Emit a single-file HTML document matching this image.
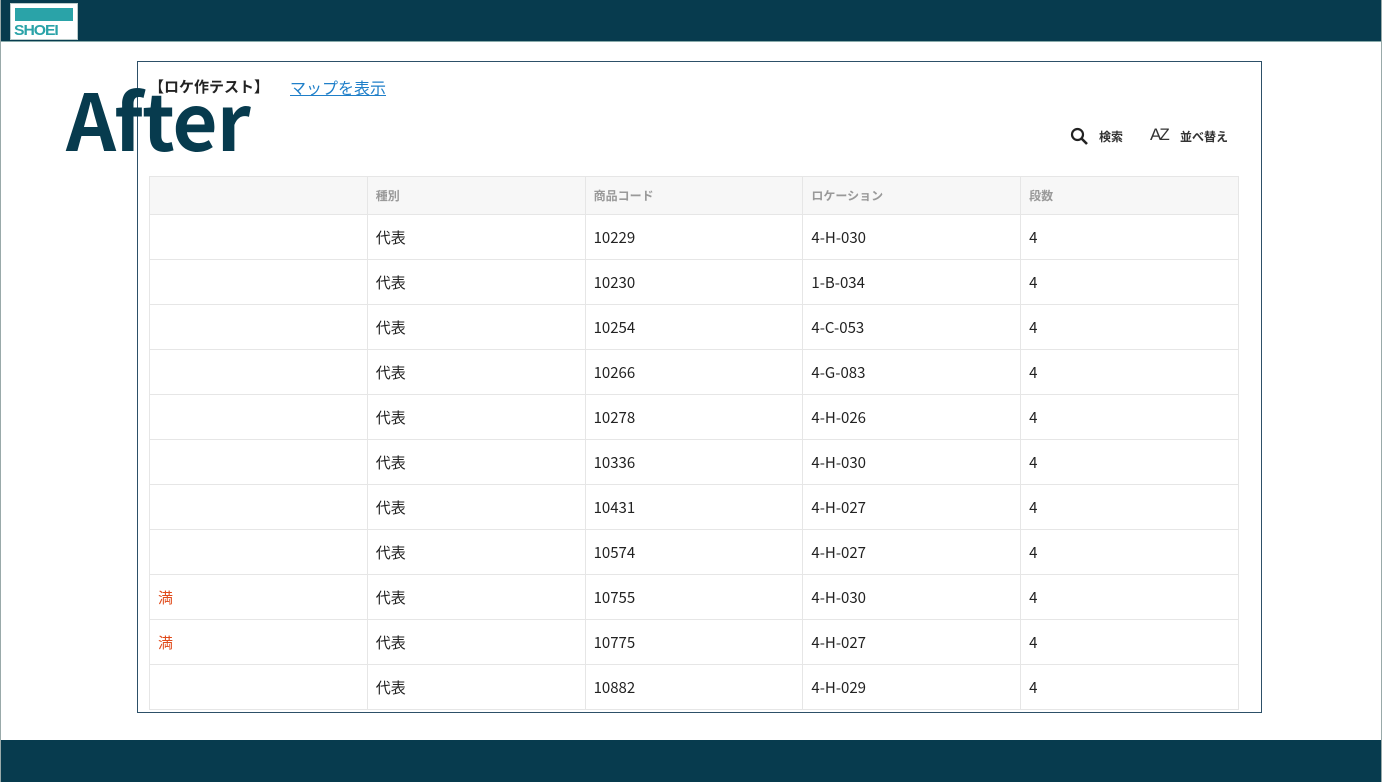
<!DOCTYPE html>
<html><head><meta charset="utf-8"><style>
*{margin:0;padding:0;box-sizing:border-box}
body{width:1382px;height:782px;background:#fff;position:relative;overflow:hidden;font-family:"Noto Sans CJK JP",sans-serif}
.edge{position:absolute;top:0;width:1px;height:782px;background:#9aa}
.top{position:absolute;left:0;top:0;width:1382px;height:42px;background:#073b4e;border-bottom:1px solid #8aa}
.bot{position:absolute;left:0;top:740px;width:1382px;height:42px;background:#073b4e}
.logo{position:absolute;left:10px;top:3px;width:68px;height:37px;background:#fff;border:1px solid #bcc}
.logo .bar{position:absolute;left:4px;top:4px;width:58px;height:13px;background:#2aa3a8}
.logo .t{position:absolute;left:3px;top:18px;font:900 15px "Liberation Sans",sans-serif;color:#2aa3a8;letter-spacing:-1px;transform:scaleX(1.05);transform-origin:left}
.panel{position:absolute;left:137px;top:61px;width:1125px;height:652px;border:1px solid #2d5068;background:#fff}
.after{position:absolute;left:66px;top:72px;font:bold 78px "Noto Sans CJK JP",sans-serif;color:#073b4e;line-height:1.2;letter-spacing:-1px}
.title{position:absolute;left:149px;top:76px;font-size:15px;font-weight:bold;color:#222}
.link{position:absolute;left:290px;top:75px;font-size:16px;color:#1f7fc9;text-decoration:underline}
.tools{position:absolute;top:128px;font-size:12px;font-weight:bold;color:#333}
table{position:absolute;left:149px;top:176px;border-collapse:collapse;width:1090px}
td,th{border:1px solid #e6e6e6;width:218px;text-align:left;padding-left:8px;font-size:15px;color:#222;font-weight:normal}
th{height:38px;background:#f7f7f7;font-size:12px;color:#999;font-weight:bold}
td{height:45px}
.r{color:#e04a1a}
</style></head><body>
<div class="top"><div class="logo"><div class="bar"></div><div class="t">SHOEI</div></div></div>
<div class="panel"></div>
<div class="title">【ロケ作テスト】</div>
<div class="link">マップを表示</div>
<svg style="position:absolute;left:1070px;top:127px" width="20" height="20" viewBox="0 0 20 20"><circle cx="7.5" cy="7.5" r="5.5" fill="none" stroke="#222" stroke-width="2.2"/><path d="M11.5 11.5L17 17" stroke="#222" stroke-width="2.6"/></svg>
<div class="tools" style="left:1099px">検索</div>
<div class="tools" style="left:1150px;font-size:17px;top:125px;font-weight:normal;font-family:'Liberation Sans',sans-serif">A<span style="position:relative;left:-2px">Z</span></div>
<div class="tools" style="left:1180px">並べ替え</div>
<table>
<tr><th></th><th>種別</th><th>商品コード</th><th>ロケーション</th><th>段数</th></tr>
<tr><td></td><td>代表</td><td>10229</td><td>4-H-030</td><td>4</td></tr>
<tr><td></td><td>代表</td><td>10230</td><td>1-B-034</td><td>4</td></tr>
<tr><td></td><td>代表</td><td>10254</td><td>4-C-053</td><td>4</td></tr>
<tr><td></td><td>代表</td><td>10266</td><td>4-G-083</td><td>4</td></tr>
<tr><td></td><td>代表</td><td>10278</td><td>4-H-026</td><td>4</td></tr>
<tr><td></td><td>代表</td><td>10336</td><td>4-H-030</td><td>4</td></tr>
<tr><td></td><td>代表</td><td>10431</td><td>4-H-027</td><td>4</td></tr>
<tr><td></td><td>代表</td><td>10574</td><td>4-H-027</td><td>4</td></tr>
<tr><td class="r">満</td><td>代表</td><td>10755</td><td>4-H-030</td><td>4</td></tr>
<tr><td class="r">満</td><td>代表</td><td>10775</td><td>4-H-027</td><td>4</td></tr>
<tr><td></td><td>代表</td><td>10882</td><td>4-H-029</td><td>4</td></tr>
</table>
<div class="after">After</div>
<div class="bot"></div>
<div class="edge" style="left:0"></div><div class="edge" style="left:1381px"></div>
</body></html>
